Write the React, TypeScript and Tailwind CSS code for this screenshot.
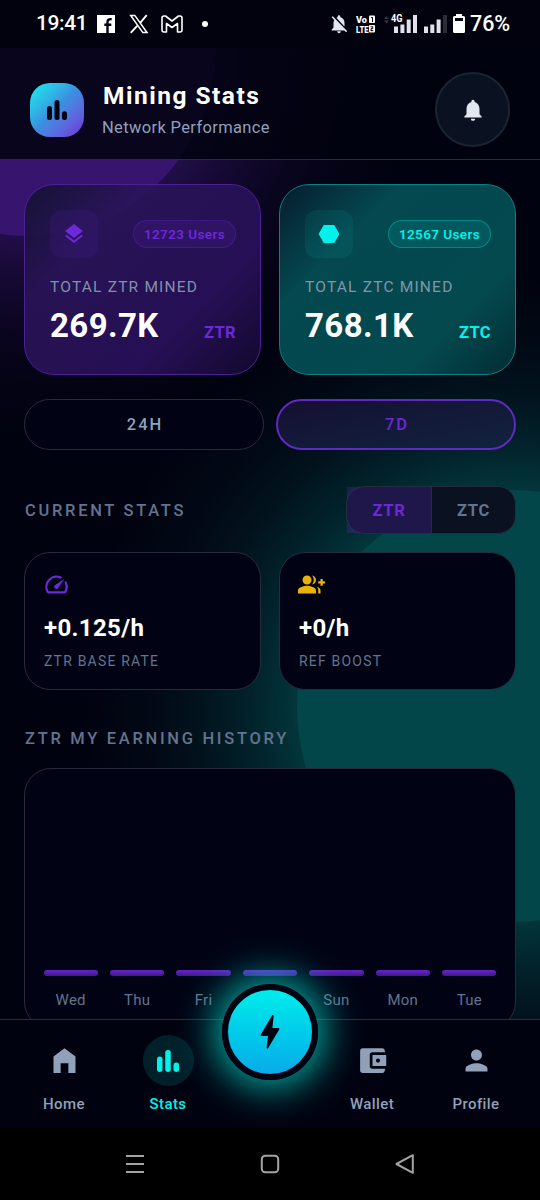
import React from 'react';
import { MdAccountBalanceWallet, MdGroupAdd, MdHexagon, MdLayers, MdNotifications, MdNotificationsOff, MdPerson, MdSpeed } from 'react-icons/md';

const days = ['Wed', 'Thu', 'Fri', 'Sat', 'Sun', 'Mon', 'Tue'];

export default function App() {
  return (
    <div className="relative flex h-[1200px] w-[540px] flex-col overflow-hidden bg-[#01020f] font-['Roboto',sans-serif] text-white">
      {/* Background glows */}
      <div className="absolute inset-0 bg-[radial-gradient(circle_at_27px_47px,rgba(55,21,111,0.6)_189px,rgba(55,21,111,0.38)_230px,rgba(55,21,111,0.18)_280px,rgba(55,21,111,0.06)_335px,transparent_390px)]" />
      <div className="absolute inset-0 bg-[radial-gradient(circle_at_513px_706px,rgba(3,75,78,0.7)_216px,rgba(3,75,78,0.44)_262px,rgba(3,75,78,0.24)_310px,rgba(3,75,78,0.1)_360px,transparent_430px)]" />
      <div className="absolute -left-[162px] -top-[142px] size-[378px] rounded-full bg-[#37156f]" />
      <div className="absolute left-[297px] top-[490px] size-[432px] rounded-full bg-[#03464a]" />

      <StatusBar />

      <header className="relative flex h-28 shrink-0 items-center border-b border-[#262c3b] bg-[#01020f]/86 pl-[30px] pr-[30px] pt-3">
        <div className="flex size-[54px] items-center justify-center rounded-[20px] bg-gradient-to-br from-[#00f2ea] via-[#3a8de0] to-[#6d28d9] text-[#01020f]">
          <PollIcon size={20} />
        </div>
        <div className="ml-[18px] flex-1 pt-0.5">
          <h1 className="pl-px text-[24.5px] font-bold leading-[30px] tracking-[1.5px]">Mining Stats</h1>
          <p className="mt-[5px] text-[16.5px] leading-6 tracking-[0.35px] text-slate-400">Network Performance</p>
        </div>
        <div className="flex size-[75px] items-center justify-center rounded-full border-2 border-[#1b2433] bg-[#0a1120]">
          <MdNotifications size={26} className="text-slate-200" />
        </div>
      </header>

      <main className="relative h-[859px] shrink-0 overflow-hidden px-6 pt-6">
        <div className="grid grid-cols-2 gap-[18px]">
          <TotalCard
            token="ZTR"
            users="12723"
            value="269.7K"
            icon={<MdLayers size={24} />}
            card="border-[#4b2197] bg-[linear-gradient(135deg,rgba(17,18,45,0.9)_0%,rgba(41,20,88,0.9)_28%,rgba(40,16,88,0.95)_70%,rgba(19,9,48,0.95)_100%)]"
            accent="text-[#6d28d9]"
            soft="bg-[#6d28d9]/10"
            pill="border-[#6d28d9]/30 bg-[#6d28d9]/12"
          />
          <TotalCard
            token="ZTC"
            users="12567"
            value="768.1K"
            icon={<MdHexagon size={24} />}
            card="border-[#0a8080] bg-[linear-gradient(135deg,#071c2d_0%,#044850_28%,#03494e_74%,#032c35_100%)]"
            accent="text-[#00f2ea]"
            soft="bg-[#00f2ea]/7"
            pill="border-[#00f2ea]/30 bg-[#00f2ea]/10"
          />
        </div>

        <div className="mt-6 grid grid-cols-2 gap-3 text-[16.5px] font-medium tracking-[2px]">
          <button className="h-[51px] rounded-full border border-[#262c3b] bg-[#010314] pl-0.5 pt-0.5 text-slate-400">24H</button>
          <button className="h-[51px] rounded-full border-2 border-[#6029c4] bg-gradient-to-br from-[#140f31] to-[#10233f] pl-0.5 pt-0.5 text-[#6d28d9]">7D</button>
        </div>

        <div className="mt-9 flex items-center justify-between">
          <SectionTitle>CURRENT STATS</SectionTitle>
          <div className="flex h-12 w-[170px] rounded-[18px] border border-[#262c3b] bg-[#0a1120] text-[16.5px] font-bold tracking-[0.8px]">
            <div className="flex w-[85px] items-center justify-center border-r border-[#2f2452] bg-[#6d28d9]/22 pt-0.5 text-[#6d28d9]">ZTR</div>
            <div className="flex flex-1 items-center justify-center pt-0.5 text-slate-500">ZTC</div>
          </div>
        </div>

        <div className="mt-[18px] grid grid-cols-2 gap-[18px]">
          <RateCard icon={<MdSpeed size={27} className="text-[#6d28d9]" />} value="+0.125/h" label="ZTR BASE RATE" />
          <RateCard icon={<MdGroupAdd size={27} className="text-[#eab308]" />} value="+0/h" label="REF BOOST" />
        </div>

        <div className="mt-9">
          <SectionTitle>ZTR MY EARNING HISTORY</SectionTitle>
        </div>

        <div className="mt-[18px] flex h-[261px] items-end gap-3 rounded-[27px] border border-[#262c3b] bg-[#010314] px-[18.5px] pb-4">
          {days.map((day) => (
            <div key={day} className="flex flex-1 flex-col items-center">
              <div className="h-[6px] w-full rounded-[3px] bg-gradient-to-b from-[#6425c6] to-[#43178d]" />
              <span className="mt-3 text-[15px] leading-[24px] tracking-[0.25px] text-slate-500">{day}</span>
            </div>
          ))}
        </div>
      </main>

      <nav className="relative flex h-[109px] shrink-0 border-t border-[#233038] bg-[#010210] px-3">
        <NavItem label="Home" icon={<HomeIcon />} />
        <NavItem label="Stats" icon={<PollIcon size={22} />} active />
        <div className="relative flex-1">
          <div className="absolute -top-9 left-1/2 flex size-24 -translate-x-1/2 items-center justify-center rounded-full border-[6px] border-[#01020f] bg-gradient-to-b from-[#00f2ea] to-[#0ea5e9] bg-origin-border shadow-[0_0_38px_7px_rgba(0,220,205,0.8)]">
            <svg width="20" height="34" viewBox="0 0 20 34" fill="#01020f">
              <path d="M12 .6c.8-.9 1.7-.5 1.6.6L12.4 13h6c1 0 1.3.7.8 1.5L8.2 33c-.7 1-1.8.7-1.6-.5L8 21H1.6c-1 0-1.3-.8-.8-1.6z" />
            </svg>
          </div>
        </div>
        <NavItem label="Wallet" icon={<MdAccountBalanceWallet size={33} />} />
        <NavItem label="Profile" icon={<MdPerson size={33} />} />
      </nav>

      <footer className="relative flex h-[72px] shrink-0 items-center justify-center gap-[115px] bg-black text-[#a3a3a3]">
        <svg width="20" height="20" viewBox="0 0 20 20" fill="none" stroke="currentColor" strokeWidth="2">
          <path d="M1 2h18M1 10h18M1 18h18" />
        </svg>
        <svg width="20" height="20" viewBox="0 0 20 20" fill="none" stroke="currentColor" strokeWidth="2">
          <rect x="1.8" y="1.8" width="16.4" height="16.4" rx="3.5" />
        </svg>
        <svg width="20" height="20" viewBox="0 0 20 20" fill="none" stroke="currentColor" strokeWidth="2" strokeLinejoin="round">
          <path d="M17.8 1.2v17.6L1.5 10z" />
        </svg>
      </footer>
    </div>
  );
}

function StatusBar() {
  return (
    <div className="relative flex h-12 shrink-0 items-center bg-[#01020e] pl-9 pr-[30px] text-[21.5px] font-medium">
      <span className="text-[21px] tracking-[-0.4px]">19:41</span>
      <svg className="ml-2.5" width="18" height="18" viewBox="0 0 18 18">
        <path fill="#fff" d="M0 0h18v18H0z" />
        <path fill="none" stroke="#01020e" strokeWidth="2.4" d="M10.5 18V7.200c0-2.300 1-3.200 4.200-3M7.300 9.800h7" />
      </svg>
      <svg className="ml-3.5" width="20" height="20" viewBox="0 0 21 20" fill="none" stroke="#fff">
        <path strokeWidth="1.6" d="M1.8 1h4.3l12.8 18h-4.4z" />
        <path strokeWidth="2" d="M18.6.8 11.7 8.8M8.6 12 1.8 19.3" />
      </svg>
      <svg className="ml-3" width="22" height="18" viewBox="0 0 22 18" fill="none" stroke="#fff" strokeWidth="1.6" strokeLinejoin="round">
        <path d="M1 3C1 1.500 2 1 3 1h1.500L11 6l6.500-5H19c1 0 2 .5 2 2v12c0 1.200-.8 2-2 2h-2.500V8.500L11 12.500 5.500 8.500V17H3c-1.200 0-2-.8-2-2z" />
      </svg>
      <span className="ml-[19px] size-1.5 rounded-full bg-white" />

      <MdNotificationsOff size={22} className="ml-auto text-slate-200" />
      <svg className="ml-1.5" width="20" height="20" viewBox="0 0 20 20" fill="#fff" fontFamily="Roboto" fontWeight="900">
        <text x="0" y="8.500" fontSize="9.5" textLength="11" lengthAdjust="spacingAndGlyphs">Vo</text>
        <text x="0" y="19" fontSize="9.5" textLength="12.500" lengthAdjust="spacingAndGlyphs">LTE</text>
        <rect x="13" y="1.500" width="6" height="7.500" rx="1" />
        <rect x="13" y="11" width="6" height="7.500" rx="1" />
        <path fill="none" stroke="#01020e" d="M15 3.500h1.500V8M14.500 12.800h2.300v1.900h-1.800v2h2.300" />
      </svg>
      <svg className="ml-2" width="34" height="20" viewBox="0 0 34 20">
        <path fill="#333642" d="M0 5l2.500-3L5 5zM0 6.500h5L2.500 9.500z" />
        <text x="7" y="8" fill="#fff" fontSize="10" fontWeight="700" fontFamily="Roboto" textLength="11.500" lengthAdjust="spacingAndGlyphs">4G</text>
        <path fill="#e2e2e9" d="M10 12.500h4V19h-4zM16.400 10.500h4V19h-4zM22.700 5.500h4V19h-4zM29 1h4v18h-4z" />
      </svg>
      <svg className="ml-[6px]" width="23" height="20" viewBox="0 0 23 20">
        <path fill="#e2e2e9" d="M0 12.500h4V19H0zM6.300 10.500h4V19h-4zM12.600 5.500h4V19h-4z" />
        <path fill="#2b2c38" d="M19 1h4v18h-4z" />
      </svg>
      <svg className="ml-1.5" width="12" height="20" viewBox="0 0 12 20">
        <path fill="#fff" fillRule="evenodd" d="M3 0h6v2h1.500Q12 2 12 3.500v14q0 1.500-1.500 1.500h-9Q0 19 0 17.500v-14Q0 2 1.500 2H3zM2 4v3h8V4z" />
      </svg>
      <span className="ml-[5px] tracking-[-0.1px]">76%</span>
    </div>
  );
}

type TotalCardProps = {
  token: string;
  users: string;
  value: string;
  icon: React.ReactNode;
  card: string;
  accent: string;
  soft: string;
  pill: string;
};

function TotalCard({ token, users, value, icon, card, accent, soft, pill }: TotalCardProps) {
  return (
    <div className={`h-[191px] rounded-[30px] border pl-[25px] pr-6 pt-[25px] ${card}`}>
      <div className="flex items-center justify-between">
        <div className={`flex size-12 items-center justify-center rounded-xl ${soft} ${accent}`}>{icon}</div>
        <div className={`flex h-7 w-[103px] items-center justify-center whitespace-nowrap rounded-full border pt-px text-[13.5px] font-semibold tracking-[0.4px] ${pill} ${accent}`}>
          {users} Users
        </div>
      </div>
      <div className="mt-[18px] text-[15.5px] leading-[22px] tracking-[1.2px] text-slate-400/90">TOTAL {token} MINED</div>
      <div className="mt-2 flex items-end justify-between">
        <span className="text-[33px] font-bold leading-[40px] tracking-[0.4px]">{value}</span>
        <span className={`text-[16.5px] font-bold leading-[26px] tracking-[0.4px] ${accent}`}>{token}</span>
      </div>
    </div>
  );
}

function RateCard({ icon, value, label }: { icon: React.ReactNode; value: string; label: string }) {
  return (
    <div className="h-[138px] rounded-[26px] border border-[#262c3b] bg-[#010314] px-[19px] pt-[18px]">
      <div className="-ml-px">{icon}</div>
      <div className="mt-[15px] text-2xl font-bold leading-[30px] tracking-[0.35px]">{value}</div>
      <div className="mt-2 text-sm leading-[20px] tracking-[1.2px] text-slate-500">{label}</div>
    </div>
  );
}

function SectionTitle({ children }: { children: React.ReactNode }) {
  return <h2 className="pl-[1px] pt-px text-[16.5px] font-medium leading-[23px] tracking-[2.7px] text-slate-500">{children}</h2>;
}

function NavItem({ label, icon, active = false }: { label: string; icon: React.ReactNode; active?: boolean }) {
  return (
    <div className={`flex w-[104px] flex-col items-center pt-[15px] ${active ? 'text-[#00f2ea]' : 'text-slate-400'}`}>
      <div className={`flex size-[51px] items-center justify-center rounded-full ${active ? 'bg-[#02202a]' : ''}`}>{icon}</div>
      <span className="mt-1.5 text-[15px] font-medium leading-6 tracking-[0.4px]">{label}</span>
    </div>
  );
}

function PollIcon({ size }: { size: number }) {
  return (
    <svg width={size} height={size} viewBox="0 0 22 22" fill="currentColor">
      <rect x="0" y="6.500" width="5.500" height="15.500" rx="2.750" />
      <rect x="8.250" y="0" width="5.500" height="22" rx="2.750" />
      <rect x="16.500" y="12.500" width="5.500" height="9.500" rx="2.750" />
    </svg>
  );
}

function HomeIcon() {
  return (
    <svg width="33" height="33" viewBox="0 0 24 24" fill="currentColor">
      <path d="M4 21V9l8-6 8 6v12h-5.200v-7H9.200v7z" />
    </svg>
  );
}
